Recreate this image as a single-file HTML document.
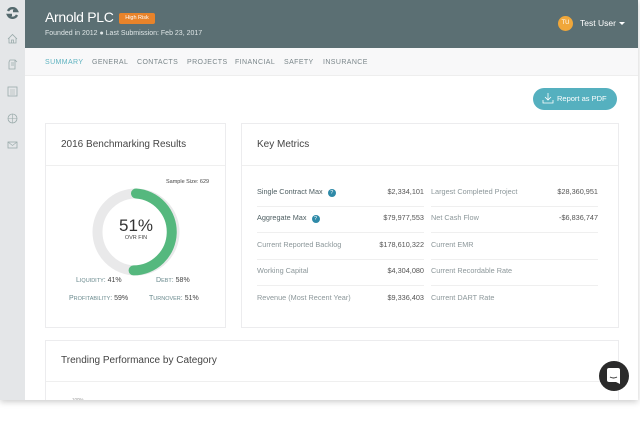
<!DOCTYPE html>
<html><head><style>
*{margin:0;padding:0;box-sizing:border-box}
body{width:640px;height:421px;background:#fff;font-family:"Liberation Sans",sans-serif;position:relative;overflow:hidden}
.a{position:absolute}
.win{left:0;top:0;width:638px;height:400px;background:#fff;box-shadow:0 2px 6px rgba(0,0,0,.2);overflow:hidden}
.side{left:0;top:0;width:25px;height:400px;background:#e4e6e8}
.hdr{left:25px;top:0;width:613px;height:48px;background:#5b6f73}
.nav{left:25px;top:48px;width:613px;height:28px;background:#f8f8f9;border-bottom:1px solid #eee}
.nav span{position:absolute;top:11px;font-size:7px;color:#7a868a;letter-spacing:.4px}
.card{background:#fff;border:1px solid #ececee}
.t{font-size:10px;color:#444}
.row{position:absolute;left:15px;width:341px;font-size:7.3px}
.lb{color:#8c979a}.lb.d{color:#4f5f63}
.v{color:#555}
.ln{position:absolute;height:1px;background:#efefef}
.q{display:inline-block;width:8px;height:8px;border-radius:50%;background:#2f8aa8;color:#fff;font-size:5.5px;text-align:center;line-height:8px;margin-left:3px}
</style></head><body>
<div class="a win">
<div class="a side">
<svg class="a" style="left:6px;top:7px" width="13" height="12" viewBox="0 0 13 12"><path d="M2 4 A5 5 0 0 1 11 4 L7 4 M11 8 A5 5 0 0 1 2 8 L6 8" fill="none" stroke="#556a6e" stroke-width="2.4"/></svg>
<svg class="a" style="left:7px;top:33px" width="11" height="11"><path d="M1 6 L5.5 1.5 L10 6 M2 5 V10 H9 V5 M4.5 10 V7 H6.5 V10" fill="none" stroke="#9aa" stroke-width=".8"/></svg>
<svg class="a" style="left:7px;top:59px" width="11" height="12"><path d="M3 1 H8 V10 H2 V3 Z M4 4 H7 M4 6 H7 M8 1 L10 3" fill="none" stroke="#9aa" stroke-width=".8"/></svg>
<svg class="a" style="left:7px;top:86px" width="11" height="11"><rect x="1" y="1" width="9" height="9" fill="none" stroke="#9aa" stroke-width=".8"/><path d="M3 4 H8 M3 6 H8 M3 8 H8" stroke="#9aa" stroke-width=".6"/></svg>
<svg class="a" style="left:7px;top:113px" width="11" height="11"><circle cx="5.5" cy="5.5" r="4.5" fill="none" stroke="#9aa" stroke-width=".8"/><path d="M1 5.5 H10 M5.5 1 V10" stroke="#9aa" stroke-width=".6"/></svg>
<svg class="a" style="left:7px;top:141px" width="11" height="9"><rect x="1" y="1" width="9" height="6" fill="none" stroke="#9aa" stroke-width=".8"/><path d="M1 1 L5.5 4.5 L10 1" fill="none" stroke="#9aa" stroke-width=".6"/></svg>
</div>
<div class="a hdr">
<div class="a" style="left:20px;top:9px;font-size:14px;color:#fff;letter-spacing:-.3px">Arnold PLC</div>
<div class="a" style="left:94px;top:13px;width:36px;height:11px;background:#e8832a;border-radius:2px;color:#fff;font-size:5.5px;text-align:center;line-height:11px">High Risk</div>
<div class="a" style="left:20px;top:30px;font-size:7px;color:#dfe6e7">Founded in 2012 ● Last Submission: Feb 23, 2017</div>
<div class="a" style="left:533px;top:16px;width:15px;height:15px;border-radius:50%;background:#f0a73a;color:#fff;font-size:6px;text-align:center;line-height:15px">TU</div>
<div class="a" style="left:555px;top:18px;font-size:8.5px;color:#fff">Test User</div>
<div class="a" style="left:594px;top:22px;border-left:3px solid transparent;border-right:3px solid transparent;border-top:3px solid #fff"></div>
</div>
<div class="a nav">
<span style="left:20px;color:#5fb3c0">SUMMARY</span><span style="left:67px">GENERAL</span><span style="left:112px">CONTACTS</span><span style="left:162px">PROJECTS</span><span style="left:210px">FINANCIAL</span><span style="left:259px">SAFETY</span><span style="left:298px">INSURANCE</span>
</div>
<div class="a" style="left:533px;top:88px;width:84px;height:22px;border-radius:11px;background:#55b0bf;color:#fff;font-size:7.5px;line-height:22px;padding-left:24px">Report as PDF</div>
<svg class="a" style="left:542px;top:92px" width="12" height="12"><path d="M6 1 V8 M3 5 L6 8 L9 5 M1 8 V11 H11 V8" fill="none" stroke="#fff" stroke-width=".8"/></svg>

<div class="a card" style="left:45px;top:123px;width:181px;height:205px">
<div class="a t" style="left:15px;top:15px">2016 Benchmarking Results</div>
<div class="ln" style="left:0;top:41px;width:179px"></div>
<div class="a" style="left:120px;top:55px;font-size:5.5px;color:#444">Sample Size: 629</div>
<svg class="a" style="left:45px;top:63px" width="90" height="90"><circle cx="45" cy="45" r="38.5" fill="none" stroke="#e9e9ea" stroke-width="10"/><path d="M45 6.5 A38.5 38.5 0 0 1 42.6 83.4" fill="none" stroke="#55b87e" stroke-width="10" stroke-linecap="round"/></svg>
<div class="a" style="left:60px;top:92px;width:60px;text-align:center;font-size:17px;color:#333">51%</div>
<div class="a" style="left:60px;top:111px;width:60px;text-align:center;font-size:5.5px;color:#444">OVR FIN</div>
<div class="a" style="left:30px;top:153px;font-size:7px;color:#6a8a8e">L<span style="font-size:5.5px">IQUIDITY</span>: <span style="color:#444">41%</span></div>
<div class="a" style="left:110px;top:153px;font-size:7px;color:#6a8a8e">D<span style="font-size:5.5px">EBT</span>: <span style="color:#444">58%</span></div>
<div class="a" style="left:23px;top:171px;font-size:7px;color:#6a8a8e">P<span style="font-size:5.5px">ROFITABILITY</span>: <span style="color:#444">59%</span></div>
<div class="a" style="left:103px;top:171px;font-size:7px;color:#6a8a8e">T<span style="font-size:5.5px">URNOVER</span>: <span style="color:#444">51%</span></div>
</div>

<div class="a card" style="left:241px;top:123px;width:378px;height:205px">
<div class="a t" style="left:15px;top:15px">Key Metrics</div>
<div class="ln" style="left:0;top:41px;width:376px"></div>
<div class="row" style="top:63px"><span class="lb d">Single Contract Max <span class="q">?</span></span><span class="v a" style="right:174px">$2,334,101</span><span class="lb a" style="left:174px">Largest Completed Project</span><span class="v a" style="right:0">$28,360,951</span></div>
<div class="row" style="top:89px"><span class="lb d">Aggregate Max <span class="q">?</span></span><span class="v a" style="right:174px">$79,977,553</span><span class="lb a" style="left:174px">Net Cash Flow</span><span class="v a" style="right:0">-$6,836,747</span></div>
<div class="row" style="top:116px"><span class="lb">Current Reported Backlog</span><span class="v a" style="right:174px">$178,610,322</span><span class="lb a" style="left:174px">Current EMR</span></div>
<div class="row" style="top:142px"><span class="lb">Working Capital</span><span class="v a" style="right:174px">$4,304,080</span><span class="lb a" style="left:174px">Current Recordable Rate</span></div>
<div class="row" style="top:169px"><span class="lb">Revenue (Most Recent Year)</span><span class="v a" style="right:174px">$9,336,403</span><span class="lb a" style="left:174px">Current DART Rate</span></div>
<div class="ln" style="left:15px;top:82px;width:167px"></div><div class="ln" style="left:189px;top:82px;width:167px"></div>
<div class="ln" style="left:15px;top:108px;width:167px"></div><div class="ln" style="left:189px;top:108px;width:167px"></div>
<div class="ln" style="left:15px;top:135px;width:167px"></div><div class="ln" style="left:189px;top:135px;width:167px"></div>
<div class="ln" style="left:15px;top:161px;width:167px"></div><div class="ln" style="left:189px;top:161px;width:167px"></div>
</div>

<div class="a card" style="left:45px;top:340px;width:574px;height:80px">
<div class="a t" style="left:15px;top:14px">Trending Performance by Category</div>
<div class="ln" style="left:0;top:40px;width:572px"></div>
<div class="a" style="left:26px;top:56px;font-size:4.5px;color:#999">100%</div>
</div>
<div class="a" style="left:599px;top:361px;width:30px;height:30px;border-radius:50%;background:#2b2b2b"></div>
<svg class="a" style="left:606px;top:367px" width="16" height="18"><rect x="1" y="1" width="13" height="14" rx="2" fill="#fff"/><path d="M4 10 Q7.5 12 11 10" fill="none" stroke="#2b2b2b" stroke-width="1"/><path d="M10 15 L14 17 V13" fill="#fff"/></svg>
</div>
</body></html>
